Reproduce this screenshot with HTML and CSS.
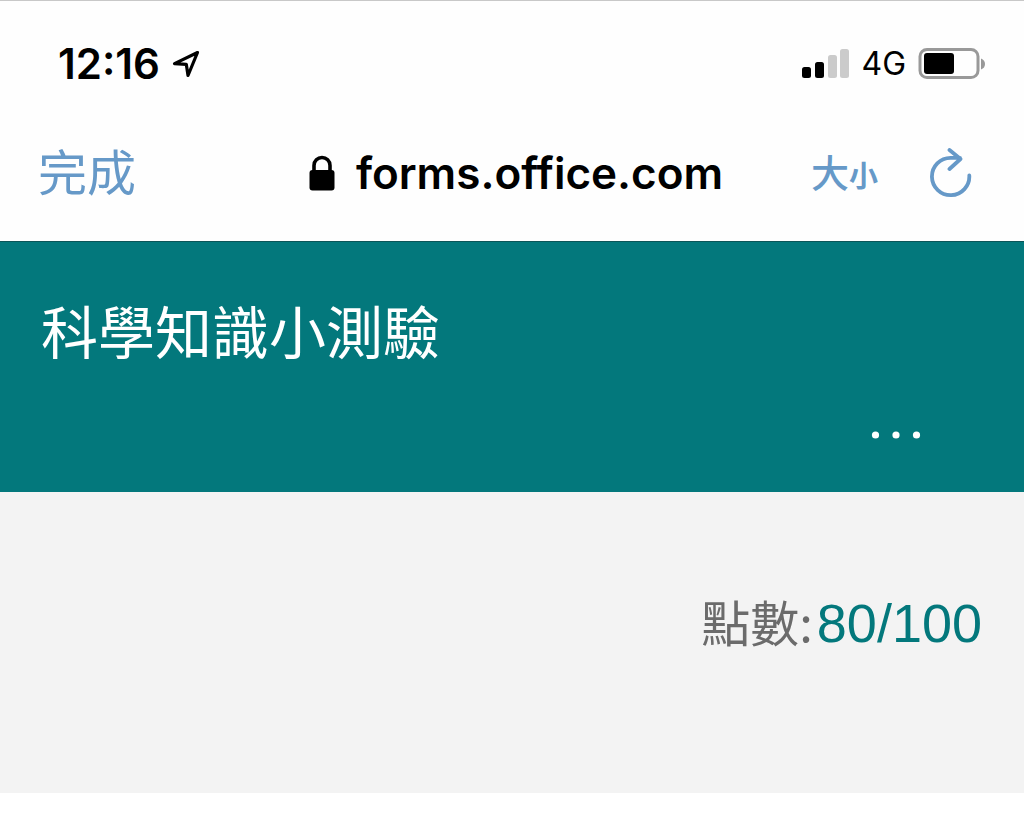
FILE: index.html
```html
<!DOCTYPE html>
<html lang="zh-Hant">
<head>
<meta charset="utf-8">
<meta name="viewport" content="width=device-width, initial-scale=1">
<title>科學知識小測驗</title>
<link rel="stylesheet" href="styles.css">
</head>
<body>
<header class="browser">
  <div class="status">
    <div class="status-group">
      <span class="time">12:16</span>
      <svg class="location" viewBox="0 0 28 28" aria-hidden="true"><path d="M25.5 2.5 2.5 13.6 14.3 14.3 16 25.5Z"/></svg>
    </div>
    <div class="status-group">
      <svg class="signal" viewBox="0 0 48 30" aria-hidden="true">
        <rect x="1" y="18" width="9" height="11" rx="2.5"/>
        <rect x="14" y="13" width="9" height="16" rx="2.5"/>
        <rect class="off" x="27" y="6" width="9" height="23" rx="2.5"/>
        <rect class="off" x="39" y="0" width="9" height="29" rx="2.5"/>
      </svg>
      <span class="network">4G</span>
      <svg class="battery" viewBox="0 0 68 32" aria-hidden="true">
        <rect class="case" x="2" y="1.5" width="58" height="28" rx="7"/>
        <rect x="6" y="5" width="30" height="21" rx="3"/>
        <path class="cap" d="M63 10.500Q67 12 67 16T63 21.500Z"/>
      </svg>
    </div>
  </div>
  <nav class="toolbar">
    <button class="tool done" type="button">完成</button>
    <div class="address">
      <svg class="lock" viewBox="0 0 26 36" aria-hidden="true"><rect x="0.5" y="15" width="25" height="20.500" rx="3"/><path d="M5 18V10.500a8 8 0 0 1 16 0V18"/></svg>
      <span>forms.office.com</span>
    </div>
    <div class="tools">
      <button class="tool text-size" type="button">大<span class="small">小</span></button>
      <button class="tool" type="button" aria-label="重新整理">
        <svg class="reload" viewBox="0 0 42 50" aria-hidden="true"><path d="M39.300 27.500A18.700 18.700 0 1 1 20.600 9.800H30M19.500 2 30.500 11 19.500 21"/></svg>
      </button>
    </div>
  </nav>
</header>
<main>
  <section class="banner">
    <h1 class="title">科學知識小測驗</h1>
    <button class="more" type="button" aria-label="更多選項">
      <svg class="dots" viewBox="0 0 50 10" aria-hidden="true"><circle cx="4.500" cy="5" r="3.600"/><circle cx="25" cy="5" r="3.600"/><circle cx="45.500" cy="5" r="3.600"/></svg>
    </button>
  </section>
  <section class="score">
    <span class="score-label">點數:</span><span class="score-value">80/100</span>
  </section>
</main>
</body>
</html>
```
FILE: styles.css
```css
* {
  box-sizing: border-box;
}

body {
  margin: 0;
  background: #fff;
  font-family: "Liberation Sans", "Noto Sans CJK TC", sans-serif;
}

button {
  padding: 0;
  border: 0;
  background: none;
  font: inherit;
  color: inherit;
  cursor: pointer;
}

svg {
  display: block;
  flex: none;
}

.browser {
  border-top: 1px solid #c8c8c8;
  border-bottom: 1px solid #0b5558;
  background: #fefefe;
  color: #000;
  font-family: Inter, "Noto Sans CJK TC", sans-serif;
}

.status {
  display: flex;
  align-items: center;
  justify-content: space-between;
  height: 103px;
  padding: 22px 38px 0 58px;
}

.status-group {
  display: flex;
  align-items: center;
  gap: 12px;
}

.time {
  font-size: 42px;
  font-weight: 600;
  line-height: 48px;
}

.location {
  width: 28px;
  height: 28px;
  fill: none;
  stroke: #000;
  stroke-width: 3.2;
  stroke-linejoin: round;
}

.signal {
  width: 48px;
  height: 30px;
}

.signal .off {
  fill: #cbcbcb;
}

.network {
  font-size: 32px;
  line-height: 40px;
}

.battery {
  width: 68px;
  height: 32px;
}

.battery .case {
  fill: none;
  stroke: #999;
  stroke-width: 3;
}

.battery .cap {
  fill: #999;
}

.toolbar {
  display: grid;
  grid-template-columns: 1fr auto 1fr;
  align-items: center;
  height: 137px;
  padding: 0 38px;
}

.tool {
  color: #6699c8;
}

.done {
  justify-self: start;
  padding-top: 2px;
  font-size: 49px;
  line-height: 64px;
}

.address {
  display: flex;
  align-items: center;
  gap: 21px;
  padding-left: 8px;
  font-size: 44px;
  font-weight: 600;
  line-height: 56px;
}

.lock {
  width: 26px;
  height: 36px;
}

.lock path {
  fill: none;
  stroke: #000;
  stroke-width: 3.6;
}

.tools {
  display: flex;
  align-items: center;
  justify-content: flex-end;
  gap: 52px;
  padding-right: 14px;
}

.text-size {
  padding-top: 4px;
  font-size: 38px;
  font-weight: 500;
  line-height: 56px;
}

.text-size .small {
  font-size: 29px;
  font-weight: 700;
}

.reload {
  width: 42px;
  height: 50px;
  fill: none;
  stroke: #6699c8;
  stroke-width: 3.8;
  stroke-linecap: round;
  stroke-linejoin: round;
}

.banner {
  display: flex;
  flex-direction: column;
  padding: 52px 103px 47px 41px;
  background: #03787c;
  color: #fff;
}

.title {
  margin: 0;
  font-size: 57px;
  font-weight: 400;
  line-height: 80px;
}

.more {
  align-self: flex-end;
  margin-top: 51px;
  padding: 5px 0;
}

.dots {
  width: 50px;
  height: 10px;
  fill: #fff;
}

.score {
  display: flex;
  align-items: baseline;
  justify-content: flex-end;
  gap: 4px;
  padding: 89px 42px 130px;
  background: #f3f3f3;
  line-height: 80px;
}

.score-label {
  color: #6b6b6b;
  font-family: "Noto Sans CJK TC", sans-serif;
  font-size: 49px;
}

.score-value {
  color: #03787c;
  font-size: 54px;
}
```
